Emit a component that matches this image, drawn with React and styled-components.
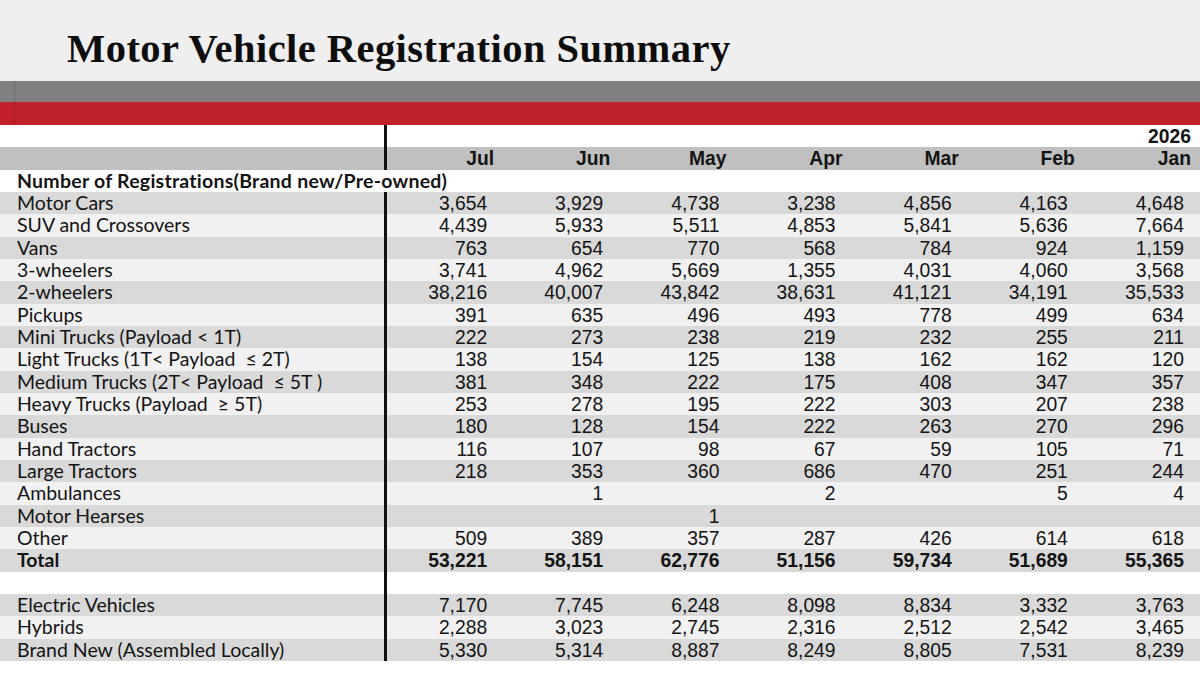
import React from "react";
import styled, { createGlobalStyle } from "styled-components";

const GlobalStyle = createGlobalStyle`
  html, body { margin: 0; padding: 0; background: #ffffff; }
  * { box-sizing: border-box; }
`;

const Page = styled.div`
  width: 1200px;
  height: 677px;
  overflow: hidden;
  background: #ffffff;
  color: #141414;
`;

const TitleBar = styled.header`
  height: 81px;
  background: #efefef;
  padding-left: 67px;
  display: flex;
  align-items: flex-end;
`;

const Title = styled.h1`
  margin: 0 0 12px 0;
  font-family: "Liberation Serif", "DejaVu Serif", serif;
  font-weight: 700;
  font-size: 40.5px;
  line-height: 1;
  color: #0d0d0d;
  letter-spacing: 0.45px;
`;

const Band = styled.div`
  height: ${(p) => p.$h}px;
  background: ${(p) => p.$color};
  display: flex;
`;

const BandStub = styled.div`
  width: 15px;
  border-right: 1px solid rgba(0, 0, 0, 0.12);
`;

const Table = styled.div`
  display: flex;
  flex-direction: column;
`;

const tones = {
  white: "#ffffff",
  dark: "#d9d9d9",
  light: "#f1f1f1",
  head: "#c0c0c0",
};

const Row = styled.div`
  display: grid;
  grid-template-columns: 387px repeat(7, 1fr);
  height: 22.33px;
  background: ${(p) => tones[p.$tone]};
`;

const SpanRow = styled.div`
  height: 22.33px;
  background: ${(p) => tones[p.$tone]};
  padding-left: 17px;
  font-family: "Lato", "Open Sans", sans-serif;
  font-weight: 700;
  font-size: 19.5px;
  letter-spacing: 0.25px;
  line-height: 22.33px;
  white-space: pre;
`;

const Label = styled.div`
  border-right: 3px solid #111;
  padding-left: 17px;
  font-family: "Lato", "Open Sans", sans-serif;
  font-weight: ${(p) => (p.$bold ? 700 : 400)};
  font-size: 19.5px;
  line-height: 22.33px;
  white-space: pre;
  overflow: visible;
`;

const Num = styled.div`
  text-align: right;
  padding-right: ${(p) => (p.$head ? 9 : 16)}px;
  padding-top: 2px;
  font-family: "Liberation Sans", Arial, sans-serif;
  font-weight: ${(p) => (p.$bold ? 700 : 400)};
  font-size: 19.3px;
  line-height: 20.33px;
  white-space: nowrap;
`;

const months = ["Jul", "Jun", "May", "Apr", "Mar", "Feb", "Jan"];

const categories = [
  ["Motor Cars", "3,654", "3,929", "4,738", "3,238", "4,856", "4,163", "4,648"],
  ["SUV and Crossovers", "4,439", "5,933", "5,511", "4,853", "5,841", "5,636", "7,664"],
  ["Vans", "763", "654", "770", "568", "784", "924", "1,159"],
  ["3-wheelers", "3,741", "4,962", "5,669", "1,355", "4,031", "4,060", "3,568"],
  ["2-wheelers", "38,216", "40,007", "43,842", "38,631", "41,121", "34,191", "35,533"],
  ["Pickups", "391", "635", "496", "493", "778", "499", "634"],
  ["Mini Trucks (Payload < 1T)", "222", "273", "238", "219", "232", "255", "211"],
  ["Light Trucks (1T< Payload  \u2264 2T)", "138", "154", "125", "138", "162", "162", "120"],
  ["Medium Trucks (2T< Payload  \u2264 5T )", "381", "348", "222", "175", "408", "347", "357"],
  ["Heavy Trucks (Payload  \u2265 5T)", "253", "278", "195", "222", "303", "207", "238"],
  ["Buses", "180", "128", "154", "222", "263", "270", "296"],
  ["Hand Tractors", "116", "107", "98", "67", "59", "105", "71"],
  ["Large Tractors", "218", "353", "360", "686", "470", "251", "244"],
  ["Ambulances", "", "1", "", "2", "", "5", "4"],
  ["Motor Hearses", "", "", "1", "", "", "", ""],
  ["Other", "509", "389", "357", "287", "426", "614", "618"],
];

const total = ["Total", "53,221", "58,151", "62,776", "51,156", "59,734", "51,689", "55,365"];

const extras = [
  ["Electric Vehicles", "7,170", "7,745", "6,248", "8,098", "8,834", "3,332", "3,763"],
  ["Hybrids", "2,288", "3,023", "2,745", "2,316", "2,512", "2,542", "3,465"],
  ["Brand New (Assembled Locally)", "5,330", "5,314", "8,887", "8,249", "8,805", "7,531", "8,239"],
];

function DataRow({ cells, tone, bold }) {
  const [label, ...values] = cells;
  return (
    <Row $tone={tone}>
      <Label $bold={bold}>{label}</Label>
      {values.map((v, i) => (
        <Num key={i} $bold={bold}>
          {v}
        </Num>
      ))}
    </Row>
  );
}

export default function App() {
  return (
    <Page>
      <GlobalStyle />
      <TitleBar>
        <Title>Motor Vehicle Registration Summary</Title>
      </TitleBar>
      <Band $h={21} $color="#808080">
        <BandStub />
      </Band>
      <Band $h={23} $color="#c0202b">
        <BandStub />
      </Band>
      <Table>
        <Row $tone="white">
          <Label />
          {months.map((m, i) => (
            <Num key={m} $head $bold>
              {i === 6 ? "2026" : ""}
            </Num>
          ))}
        </Row>
        <Row $tone="head">
          <Label />
          {months.map((m) => (
            <Num key={m} $head $bold>
              {m}
            </Num>
          ))}
        </Row>
        <SpanRow $tone="white">Number of Registrations(Brand new/Pre-owned)</SpanRow>
        {categories.map((c, i) => (
          <DataRow key={c[0]} cells={c} tone={i % 2 === 0 ? "dark" : "light"} />
        ))}
        <DataRow cells={total} tone="dark" bold />
        <DataRow cells={["", "", "", "", "", "", "", ""]} tone="white" />
        {extras.map((c, i) => (
          <DataRow key={c[0]} cells={c} tone={i % 2 === 0 ? "dark" : "light"} />
        ))}
      </Table>
    </Page>
  );
}
